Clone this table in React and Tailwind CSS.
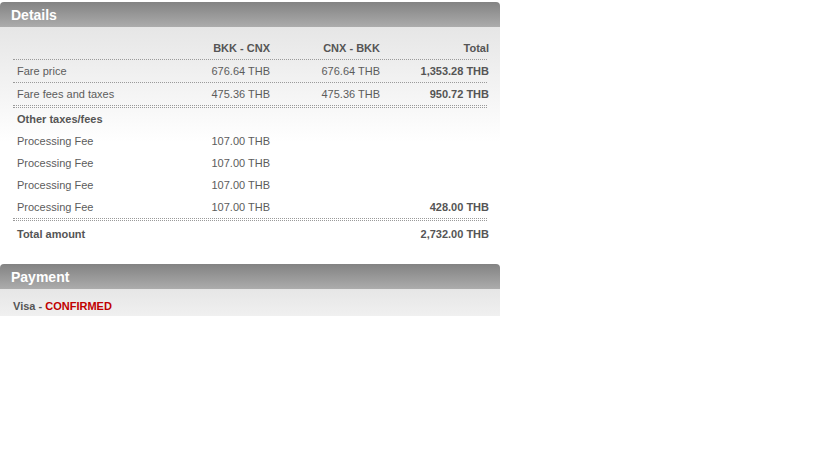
import React from 'react';

const font = { fontFamily: '"Liberation Sans", Arial, sans-serif' };

const Dotted = () => <div className="border-t border-dotted border-[#9a9a9a]" />;

const DoubleDotted = () => (
  <div>
    <div className="border-t border-dotted border-[#9a9a9a]" />
    <div className="h-px" />
    <div className="border-t border-dotted border-[#9a9a9a]" />
  </div>
);

const Row = ({ label, a = '', b = '', total = '', bold = false }) => (
  <div className="grid grid-cols-[157px_100px_110px_110px] h-[22px] items-center text-[11px] text-[#5c5c5c]">
    <div className={`pl-1 ${bold ? 'font-bold text-[#555]' : ''}`}>{label}</div>
    <div className="text-right">{a}</div>
    <div className="text-right">{b}</div>
    <div className="text-right font-bold text-[#555] pr-px">{total}</div>
  </div>
);

const PanelHeader = ({ title }) => (
  <div className="h-[25px] rounded-t-[4px] bg-gradient-to-b from-[#838383] to-[#acacac] flex items-center pl-[11px] pt-[2px]">
    <span className="text-white font-bold text-[14px]">{title}</span>
  </div>
);

export default function App() {
  const fees = ['107.00 THB', '107.00 THB', '107.00 THB', '107.00 THB'];

  return (
    <div className="w-[819px] h-[460px] bg-white pt-[2px]" style={font}>
      <div className="w-[500px]">
        <PanelHeader title="Details" />
        <div className="bg-gradient-to-b from-[#e6e6e6] via-white to-white px-[13px] pt-[10px] pb-[13px]">
          <div className="grid grid-cols-[157px_100px_110px_110px] h-[22px] items-center text-[11px] text-[#555] font-bold">
            <div />
            <div className="text-right">BKK - CNX</div>
            <div className="text-right">CNX - BKK</div>
            <div className="text-right pr-px">Total</div>
          </div>
          <Dotted />
          <Row label="Fare price" a="676.64 THB" b="676.64 THB" total="1,353.28 THB" />
          <Dotted />
          <Row label="Fare fees and taxes" a="475.36 THB" b="475.36 THB" total="950.72 THB" />
          <DoubleDotted />
          <div className="h-[22px] flex items-center pl-1 text-[11px] font-bold text-[#555]">Other taxes/fees</div>
          {fees.map((fee, i) => (
            <Row
              key={i}
              label="Processing Fee"
              a={fee}
              total={i === fees.length - 1 ? '428.00 THB' : ''}
            />
          ))}
          <DoubleDotted />
          <div className="pt-[2px]">
            <Row label="Total amount" bold total="2,732.00 THB" />
          </div>
        </div>
      </div>

      <div className="w-[500px] mt-[6px]">
        <PanelHeader title="Payment" />
        <div className="h-[27px] bg-gradient-to-b from-[#e6e6e6] to-[#f0f0f0] flex items-end pb-[2px] pl-[13px] text-[11px] font-bold text-[#555]">
          <span>Visa - <span className="text-[#c00000]">CONFIRMED</span></span>
        </div>
      </div>
    </div>
  );
}
